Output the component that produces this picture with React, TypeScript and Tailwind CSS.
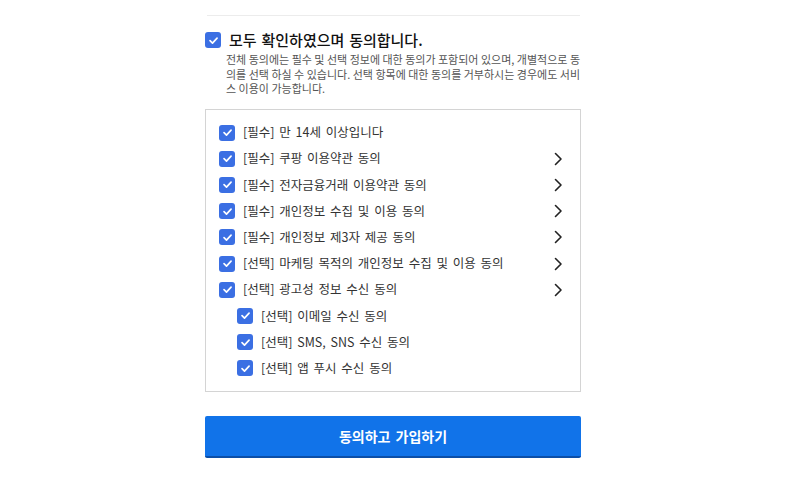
import { ReactNode } from 'react'

const font = { fontFamily: '"Noto Sans CJK KR", "Noto Sans", sans-serif' }

function Check({ size = 16 }: { size?: number }) {
  return (
    <span
      className="flex shrink-0 items-center justify-center rounded-[3px] bg-[#3b6fe3]"
      style={{ width: size, height: size }}
    >
      <svg width="11" height="11" viewBox="0 0 12 12" fill="none">
        <path d="M2.2 6.2 4.9 8.8 9.9 3.4" stroke="white" strokeWidth="1.8" strokeLinecap="round" strokeLinejoin="round" />
      </svg>
    </span>
  )
}

function Chevron() {
  return (
    <svg width="9" height="14" viewBox="0 0 9 14" fill="none" className="mr-[17px] shrink-0">
      <path d="M1.5 1.5 7 7l-5.5 5.5" stroke="#222" strokeWidth="1.6" strokeLinecap="round" strokeLinejoin="round" />
    </svg>
  )
}

function Row({ children, sub, arrow }: { children: ReactNode; sub?: boolean; arrow?: boolean }) {
  return (
    <div className={`flex h-[26.2px] items-center ${sub ? 'pl-[31px]' : 'pl-[13px]'}`}>
      <Check />
      <span className="ml-[8px] flex-1 text-[12.5px] text-[#333] [word-spacing:2px]">{children}</span>
      {arrow && <Chevron />}
    </div>
  )
}

const items: { label: string; sub?: boolean; arrow?: boolean }[] = [
  { label: '[필수] 만 14세 이상입니다' },
  { label: '[필수] 쿠팡 이용약관 동의', arrow: true },
  { label: '[필수] 전자금융거래 이용약관 동의', arrow: true },
  { label: '[필수] 개인정보 수집 및 이용 동의', arrow: true },
  { label: '[필수] 개인정보 제3자 제공 동의', arrow: true },
  { label: '[선택] 마케팅 목적의 개인정보 수집 및 이용 동의', arrow: true },
  { label: '[선택] 광고성 정보 수신 동의', arrow: true },
  { label: '[선택] 이메일 수신 동의', sub: true },
  { label: '[선택] SMS, SNS 수신 동의', sub: true },
  { label: '[선택] 앱 푸시 수신 동의', sub: true },
]

export default function App() {
  return (
    <div className="h-[483px] w-[800px] overflow-hidden bg-white" style={font}>
      <div className="ml-[205px] w-[376px] pt-[15px]">
        <div className="ml-[2px] h-px w-[373px] bg-[#ececec]" />

        <div className="mt-[16px] flex items-center">
          <Check size={16} />
          <span className="ml-[8px] text-[15px] font-medium leading-[16px] text-[#111] [word-spacing:1.5px]">모두 확인하였으며 동의합니다.</span>
        </div>
        <p className="mt-[4px] ml-[21px] break-all text-[11px] leading-[14.5px] text-[#555]">
          전체 동의에는 필수 및 선택 정보에 대한 동의가 포함되어 있으며, 개별적으로 동의를 선택 하실 수 있습니다. 선택 항목에 대한 동의를 거부하시는 경우에도 서비스 이용이 가능합니다.
        </p>

        <div className="mt-[13px] border border-[#d4d4d4] pt-[10px] pb-[10px]">
          {items.map((it) => (
            <Row key={it.label} sub={it.sub} arrow={it.arrow}>
              {it.label}
            </Row>
          ))}
        </div>

        <button className="mt-[24px] flex h-[42px] w-full items-center justify-center rounded-[2px] border-b-2 border-[#0c4fa8] bg-[#1173e9] text-[14px] font-semibold text-white [word-spacing:2px]">
          동의하고 가입하기
        </button>
      </div>
    </div>
  )
}
